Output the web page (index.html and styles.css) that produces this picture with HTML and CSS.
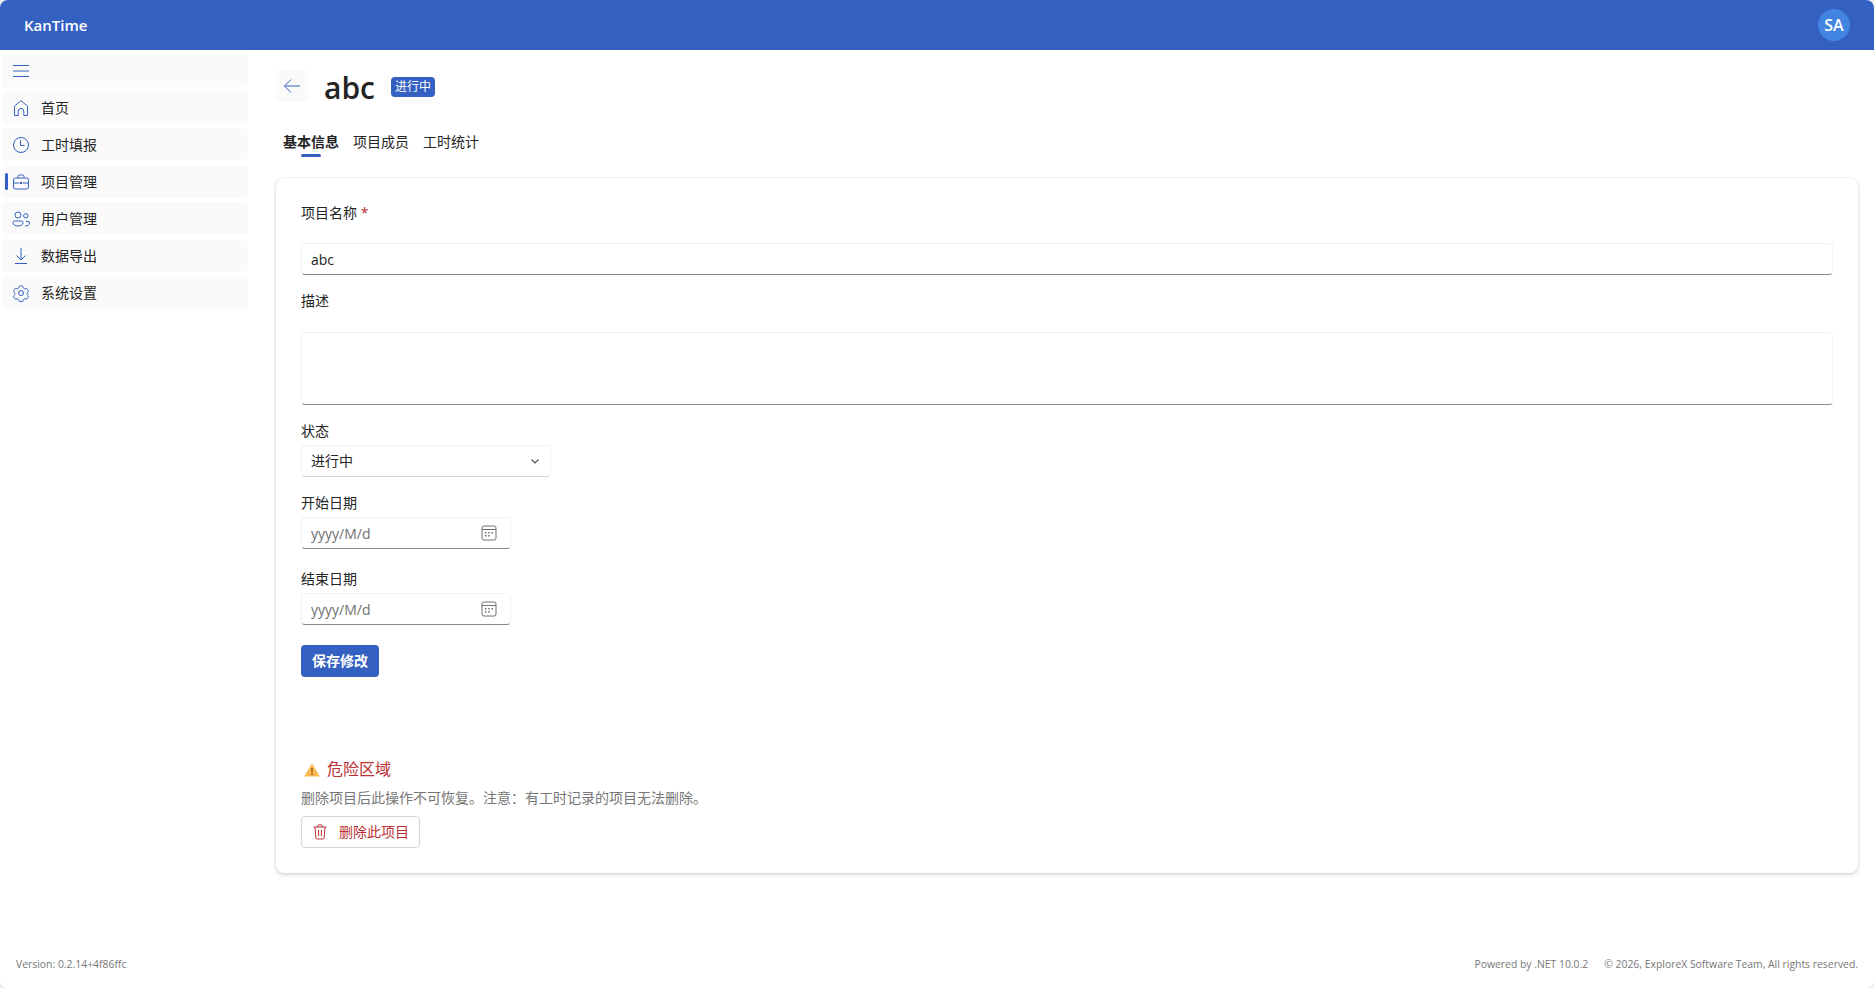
FILE: index.html
```html
<!DOCTYPE html>
<html lang="zh-CN">
<head>
<meta charset="utf-8">
<title>KanTime</title>
<link rel="stylesheet" href="styles.css">
</head>
<body>
<div class="app">
  <header class="topbar">
    <span class="brand">KanTime</span>
    <span class="avatar">SA</span>
  </header>
  <div class="body-row">
    <nav class="sidebar">
      <button class="nav-item" aria-label="menu">
        <svg class="nav-icon" viewBox="0 0 20 20"><path d="M3 5.500h16M3 11h16M3 16.500h16" transform="translate(-1 -1)"/></svg>
      </button>
      <a class="nav-item">
        <svg class="nav-icon" viewBox="0 0 20 20"><path d="M3.500 17.500V8.200L10 2.600l6.500 5.600v9.300h-3.700v-4.300a2.800 2.800 0 0 0-5.600 0v4.300z"/></svg>
        <span>首页</span>
      </a>
      <a class="nav-item">
        <svg class="nav-icon" viewBox="0 0 20 20"><circle cx="10" cy="10" r="7.500"/><path d="M9.500 5v5.500h4"/></svg>
        <span>工时填报</span>
      </a>
      <a class="nav-item active">
        <svg class="nav-icon" viewBox="0 0 20 20"><rect x="2.500" y="6" width="15" height="11" rx="2"/><path d="M7 6V4.500A1.500 1.500 0 0 1 8.500 3h3A1.500 1.500 0 0 1 13 4.500V6M2.500 11h5.500M12 11h5.500"/><rect x="8.800" y="10" width="2.400" height="2" class="solid"/></svg>
        <span>项目管理</span>
      </a>
      <a class="nav-item">
        <svg class="nav-icon" viewBox="0 0 20 20"><circle cx="7" cy="6" r="3"/><circle cx="14.800" cy="6.800" r="2.200"/><path d="M2 13.500A1.500 1.500 0 0 1 3.500 12h7a1.500 1.500 0 0 1 1.500 1.500c0 2-2 3.500-5 3.500s-5-1.500-5-3.500zM14 17c2.500 0 4.500-1 4.500-3a1.500 1.500 0 0 0-1.500-1.500h-2"/></svg>
        <span>用户管理</span>
      </a>
      <a class="nav-item">
        <svg class="nav-icon" viewBox="0 0 20 20"><path d="M10 2v12M5.500 9.500 10 14l4.500-4.500M4 17.500h12"/></svg>
        <span>数据导出</span>
      </a>
      <a class="nav-item">
        <svg class="nav-icon" viewBox="0 0 20 20"><circle cx="10" cy="10" r="2.500"/><path d="M8 2.400c1.300-.3 2.700-.3 4 0l.5 2 1.900 1.100 2-.6c.9 1 1.600 2.200 2 3.500L16.900 9.800v2.200l1.500 1.400c-.4 1.300-1.100 2.500-2 3.500l-2-.6-1.900 1.100-.5 2c-1.300.3-2.700.3-4 0l-.5-2-1.900-1.100-2 .6c-.9-1-1.600-2.200-2-3.500L3.100 12V9.800L1.600 8.400c.4-1.300 1.100-2.500 2-3.500l2 .6 1.900-1.100z" transform="translate(1 1) scale(.9)"/></svg>
        <span>系统设置</span>
      </a>
    </nav>
    <main class="content">
      <div class="title-row">
        <button class="back-btn" aria-label="back">
          <svg viewBox="0 0 20 20"><path d="M18 10H2.500M9 3.500 2.500 10 9 16.500"/></svg>
        </button>
        <h1 class="page-title">abc</h1>
        <span class="badge">进行中</span>
      </div>
      <div class="tabs">
        <span class="tab selected">基本信息</span>
        <span class="tab">项目成员</span>
        <span class="tab">工时统计</span>
      </div>
      <section class="card">
        <label class="label label-wide">项目名称 <span class="req">*</span></label>
        <input class="field field-full" type="text" value="abc">
        <label class="label label-wide">描述</label>
        <textarea class="field field-area"></textarea>
        <label class="label">状态</label>
        <div class="select">
          <span>进行中</span>
          <svg viewBox="0 0 12 12"><path d="M2.500 4.500 6 8l3.500-3.500"/></svg>
        </div>
        <label class="label">开始日期</label>
        <div class="date field">
          <input type="text" placeholder="yyyy/M/d">
          <svg viewBox="0 0 16 16"><rect x="1" y="1" width="14" height="14" rx="2"/><path d="M1 4.500h14"/><g class="dots"><rect x="4" y="7" width="1.500" height="1.500"/><rect x="7.200" y="7" width="1.500" height="1.500"/><rect x="10.500" y="7" width="1.500" height="1.500"/><rect x="4" y="10" width="1.500" height="1.500"/><rect x="7.200" y="10" width="1.500" height="1.500"/></g></svg>
        </div>
        <label class="label label-next">结束日期</label>
        <div class="date field">
          <input type="text" placeholder="yyyy/M/d">
          <svg viewBox="0 0 16 16"><rect x="1" y="1" width="14" height="14" rx="2"/><path d="M1 4.500h14"/><g class="dots"><rect x="4" y="7" width="1.500" height="1.500"/><rect x="7.200" y="7" width="1.500" height="1.500"/><rect x="10.500" y="7" width="1.500" height="1.500"/><rect x="4" y="10" width="1.500" height="1.500"/><rect x="7.200" y="10" width="1.500" height="1.500"/></g></svg>
        </div>
        <button class="save-btn">保存修改</button>
        <div class="danger-title">
          <svg viewBox="0 0 16 14"><path class="warn-fill" d="M8 .5 15.800 13.500H.2z"/><path class="warn-mark" d="M7.400 5h1.200l-.2 4.800h-.8zM7.300 10.700h1.400v1.400H7.300z"/></svg>
          <span>危险区域</span>
        </div>
        <p class="danger-text">删除项目后此操作不可恢复。注意：有工时记录的项目无法删除。</p>
        <button class="delete-btn">
          <svg viewBox="0 0 14 16"><path d="M.8 3h12.400M4.700 3V2.300A1.500 1.500 0 0 1 6.200.8h1.600a1.500 1.500 0 0 1 1.500 1.500V3M2 3l.8 10.700A1.500 1.500 0 0 0 4.300 15h5.400a1.500 1.500 0 0 0 1.500-1.300L12 3M5.600 6v6M8.400 6v6"/></svg>
          <span>删除此项目</span>
        </button>
      </section>
    </main>
  </div>
  <footer class="footer">
    <span>Version: 0.2.14+4f86ffc</span>
    <span class="footer-right"><span>Powered by .NET 10.0.2</span><span>© 2026, ExploreX Software Team, All rights reserved.</span></span>
  </footer>
</div>
</body>
</html>
```

FILE: styles.css
```css
* { box-sizing: border-box; }
html, body { margin: 0; height: 100%; }
body {
  background: #ececec;
  font-family: "Open Sans", "Noto Sans CJK SC", sans-serif;
  font-size: 14px;
  line-height: 20px;
  color: #242424;
}
.app {
  height: 100vh;
  display: flex;
  flex-direction: column;
  background: #fff;
  border-radius: 8px;
  overflow: hidden;
}
.topbar {
  flex: none;
  height: 50px;
  background: #3461c1;
  color: #fff;
  display: flex;
  align-items: center;
  justify-content: space-between;
  padding: 0 24px;
}
.brand { font-size: 15px; font-weight: 600; }
.avatar {
  width: 32px;
  height: 32px;
  border-radius: 50%;
  background: #4285e0;
  display: flex;
  align-items: center;
  justify-content: center;
  font-weight: 600;
  font-size: 16px;
}
.body-row { flex: 1; display: flex; min-height: 0; }
.sidebar {
  flex: none;
  width: 252px;
  padding: 4px 4px 0 2px;
  display: flex;
  flex-direction: column;
  gap: 4px;
}
.nav-item {
  position: relative;
  height: 33px;
  display: flex;
  align-items: center;
  gap: 10px;
  padding: 0 9px;
  background: #fafafa;
  border: 0;
  border-radius: 4px;
  font: inherit;
  color: #242424;
  text-align: left;
}
.nav-icon {
  width: 20px;
  height: 20px;
  fill: none;
  stroke: #3461c1;
  stroke-width: 1;
  flex: none;
}
.nav-icon .solid { fill: #3461c1; stroke: none; }
.nav-item.active::before {
  content: "";
  position: absolute;
  left: 3px;
  top: 8px;
  width: 3px;
  height: 17px;
  border-radius: 2px;
  background: #3461c1;
}
.content { flex: 1; min-width: 0; padding: 20px 16px 0 24px; }
.title-row { display: flex; align-items: center; height: 32px; }
.back-btn {
  width: 32px;
  height: 32px;
  padding: 6px;
  background: #fafafa;
  border: 0;
  border-radius: 4px;
  display: flex;
}
.back-btn svg { width: 20px; height: 20px; fill: none; stroke: #3461c1; stroke-width: 1; }
.page-title {
  margin: 4px 16px 0 16px;
  font-size: 30px;
  line-height: 40px;
  font-weight: 600;
  color: #242424;
}
.badge {
  height: 20px;
  padding: 0 4px;
  background: #3461c1;
  color: #fff;
  border-radius: 4px;
  font-size: 12px;
  line-height: 20px;
  margin-top: 1px;
}
.tabs {
  display: flex;
  gap: 14px;
  margin-top: 24px;
  padding-left: 7px;
  height: 32px;
}
.tab { position: relative; line-height: 31px; height: 32px; }
.tab.selected { font-weight: 700; }
.tab.selected::after {
  content: "";
  position: absolute;
  left: 18px;
  bottom: 1px;
  width: 20px;
  height: 3px;
  border-radius: 2px;
  background: #3461c1;
}
.card {
  margin-top: 20px;
  padding: 25px 25px 25px;
  border-radius: 8px;
  background: #fff;
  box-shadow: 0 0 2px rgba(0,0,0,.14), 0 2px 4px rgba(0,0,0,.14);
  display: flex;
  flex-direction: column;
  align-items: flex-start;
}
.label { display: block; margin: 16px 0 4px; color: #242424; }
.label:first-child { margin-top: 0; }
.label-wide { margin-bottom: 21px; }
.label:first-child.label-wide { margin-bottom: 20px; }
.label-next { margin-top: 20px; }
.req { color: #bc2f32; }
.field {
  display: block;
  background: #fff;
  border: 1px solid #f2f2f2;
  border-bottom: 1px solid #8a8a8a;
  border-radius: 4px;
  font: inherit;
  color: #242424;
  outline: 0;
}
.field-full { width: 100%; height: 32px; padding: 0 9px; }
.field-area { width: 100%; height: 73px; resize: none; padding: 5px 9px; }
.select {
  width: 250px;
  height: 32px;
  padding: 0 9px;
  display: flex;
  align-items: center;
  justify-content: space-between;
  border: 1px solid #f2f2f2;
  border-bottom-color: #d6d6d6;
  border-radius: 4px;
}
.select svg { width: 12px; height: 12px; fill: none; stroke: #555; stroke-width: 1.200; }
.date {
  width: 210px;
  height: 32px;
  display: flex;
  align-items: center;
  padding: 0 13px 0 9px;
}
.date input {
  flex: 1;
  min-width: 0;
  border: 0;
  outline: 0;
  padding: 2px 0 0;
  font: inherit;
  background: transparent;
}
.date input::placeholder { color: #707070; opacity: 1; }
.date svg { width: 16px; height: 16px; fill: none; stroke: #707070; stroke-width: 1; flex: none; }
.date .dots rect { fill: #707070; stroke: none; }
.save-btn {
  margin-top: 20px;
  width: 78px;
  height: 32px;
  border: 0;
  border-radius: 4px;
  background: #3461c1;
  color: #fff;
  font: inherit;
  font-weight: 600;
}
.danger-title {
  margin-top: 81px;
  height: 22px;
  display: flex;
  align-items: center;
  gap: 7px;
  padding-left: 3px;
  font-size: 16px;
  color: #bc2f32;
}
.danger-title svg { width: 16px; height: 14px; margin-top: 2px; }
.warn-fill { fill: #ffb74d; }
.warn-mark { fill: #5a3a00; }
.danger-text { margin: 8px 0; color: #777; }
.delete-btn {
  width: 119px;
  height: 32px;
  padding: 0 0 0 11px;
  display: flex;
  align-items: center;
  gap: 12px;
  background: #fff;
  border: 1px solid #d6d6d6;
  border-radius: 4px;
  color: #bc2f32;
  font: inherit;
  white-space: nowrap;
}
.delete-btn svg { width: 14px; height: 16px; fill: none; stroke: #bc2f32; stroke-width: 1; flex: none; }
.footer {
  flex: none;
  height: 48px;
  padding: 0 16px;
  display: flex;
  align-items: center;
  justify-content: space-between;
  font-size: 10.400px;
  color: #777;
}
.footer-right { display: flex; gap: 16px; }
```
